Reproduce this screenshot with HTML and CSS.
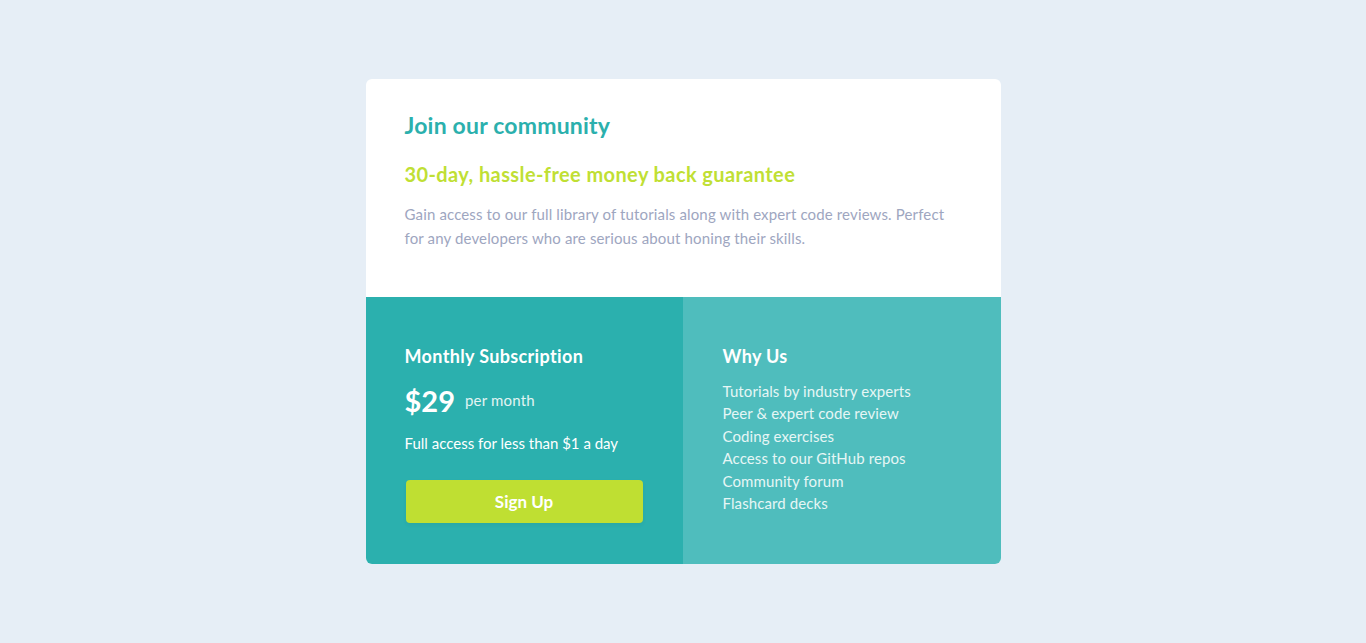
FILE: index.html
```html
<!DOCTYPE html>
<html lang="en">
<head>
<meta charset="utf-8">
<title>Single price grid</title>
<link rel="stylesheet" href="styles.css">
</head>
<body>
<main class="card">
  <section class="top">
    <h1 class="title">Join our community</h1>
    <h2 class="subtitle">30-day, hassle-free money back guarantee</h2>
    <p class="intro">Gain access to our full library of tutorials along with expert code reviews. Perfect for any developers who are serious about honing their skills.</p>
  </section>
  <div class="bottom">
    <section class="sub">
      <h3 class="sub-title">Monthly Subscription</h3>
      <div class="price"><span class="amount">$29</span><span class="per">per month</span></div>
      <p class="sub-note">Full access for less than $1 a day</p>
      <button class="btn" type="button">Sign Up</button>
    </section>
    <section class="why">
      <h3 class="sub-title">Why Us</h3>
      <ul class="why-list">
        <li>Tutorials by industry experts</li>
        <li>Peer &amp; expert code review</li>
        <li>Coding exercises</li>
        <li>Access to our GitHub repos</li>
        <li>Community forum</li>
        <li>Flashcard decks</li>
      </ul>
    </section>
  </div>
</main>
</body>
</html>
```
FILE: styles.css
```css
* { box-sizing: border-box; }
html, body { margin: 0; padding: 0; }
body {
  background: #e6eef6;
  font-family: "Lato", "Open Sans", sans-serif;
  min-height: 643px;
  display: flex;
  justify-content: center;
  align-items: flex-start;
  padding-top: 79px;
}
.card {
  width: 635px;
  border-radius: 6px;
  overflow: hidden;
  background: #fff;
}
.top {
  padding: 32px 50px 47px 39px;
}
.title {
  margin: 0;
  font-size: 23px;
  line-height: 28px;
  font-weight: 700;
  letter-spacing: 0.2px;
  color: #2bb0ad;
}
.subtitle {
  margin: 23px 0 0;
  font-size: 20px;
  line-height: 24px;
  font-weight: 700;
  letter-spacing: 0.4px;
  color: #c0df34;
}
.intro {
  margin: 16px 0 0;
  font-size: 15px;
  line-height: 24px;
  letter-spacing: 0.14px;
  color: #9ea6bf;
}
.bottom {
  display: grid;
  grid-template-columns: 317px 318px;
}
.sub {
  background: #2bb0ae;
  color: #fff;
  padding: 47px 40px 41px 39px;
}
.why {
  background: #4fbdbd;
  color: #fff;
  padding: 47px 40px 41px 40px;
}
.sub-title {
  margin: 0;
  font-size: 18px;
  line-height: 24px;
  font-weight: 700;
  letter-spacing: 0.35px;
}
.price {
  margin-top: 12px;
  display: flex;
  align-items: center;
  height: 40px;
  gap: 10px;
}
.amount {
  font-size: 29px;
  font-weight: 700;
}
.per {
  font-size: 15px;
  letter-spacing: 0.2px;
  color: #e2f4f3;
}
.sub-note {
  margin: 11px 0 0;
  font-size: 15px;
  line-height: 24px;
}
.btn {
  margin-top: 25px;
  display: block;
  width: 237px;
  height: 43px;
  border: 0;
  border-radius: 4px;
  background: #bfdf32;
  color: #fff;
  font-family: inherit;
  font-size: 17px;
  font-weight: 700;
  box-shadow: 0 2px 4px rgba(0, 0, 0, 0.05);
  margin-left: 1px;
}
.why-list {
  list-style: none;
  margin: 12px 0 0;
  padding: 0;
  font-size: 15px;
  line-height: 22.4px;
  letter-spacing: 0.1px;
  color: #e6f6f5;
}
```
